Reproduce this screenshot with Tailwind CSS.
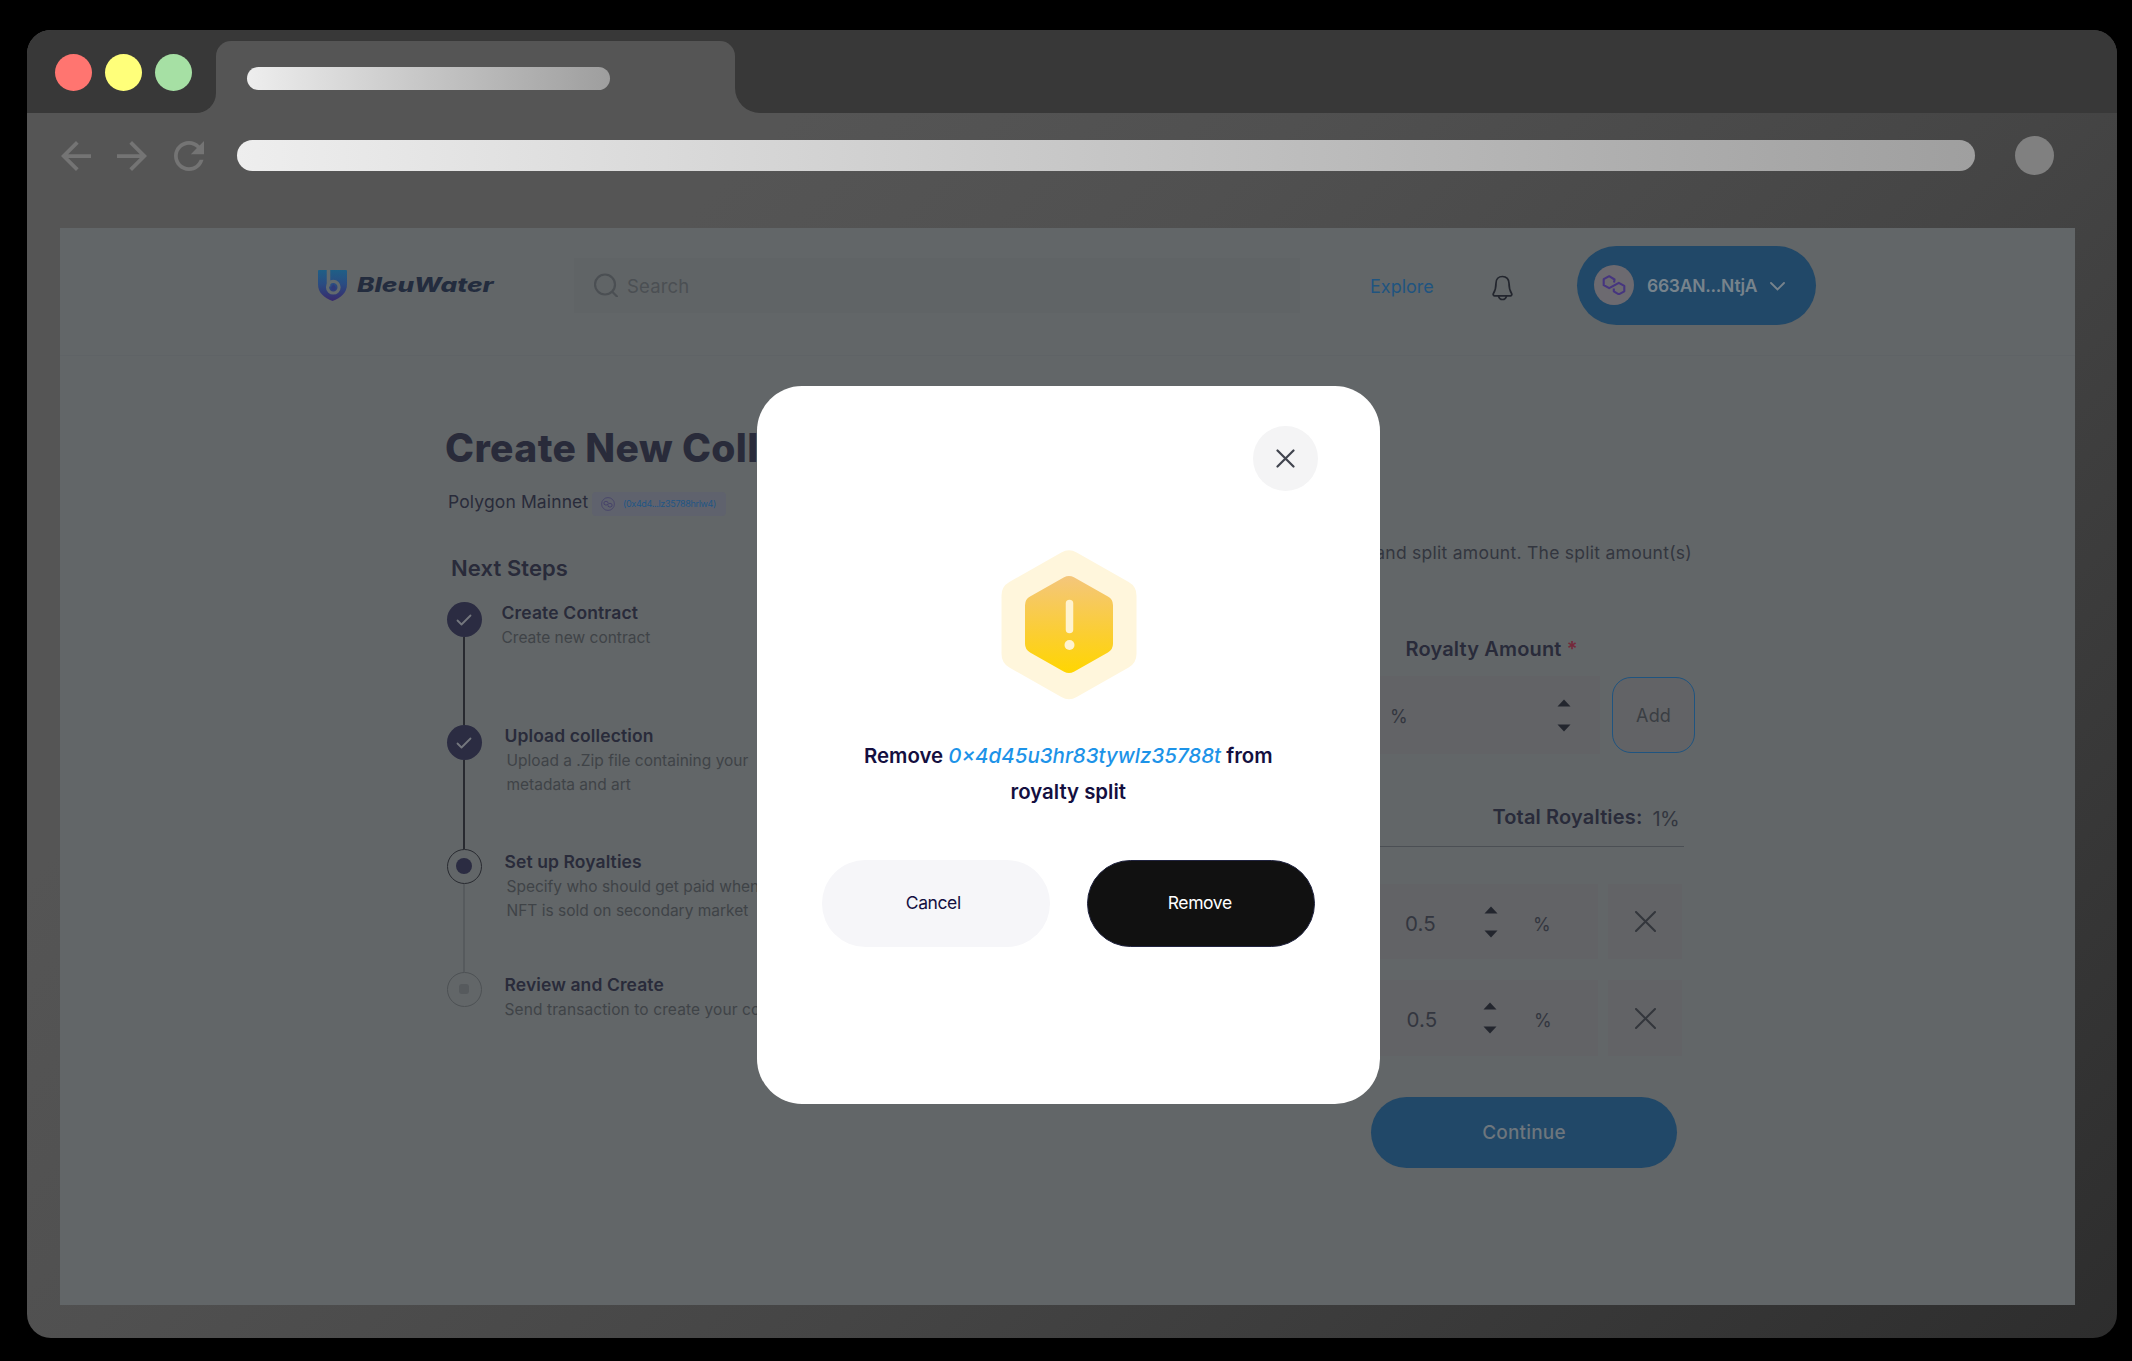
<!DOCTYPE html>
<html lang="en">
<head>
<meta charset="utf-8">
<title>BleuWater – Create New Collection</title>
<script src="https://cdn.jsdelivr.net/npm/@tailwindcss/browser@4"></script>
</head>
<body class="h-[1361px] w-[2132px] overflow-hidden bg-black pt-[30px] pl-[27px] font-['Inter',sans-serif] whitespace-nowrap">
<div class="relative flex h-[1307.5px] w-[2089.5px] flex-col overflow-hidden rounded-[24px] bg-[linear-gradient(135deg,#555_0%,#555_25%,#505050_40%,#454545_62%,#2d2d2d_100%)]">

  <!-- Tab strip -->
  <div class="flex h-[83px] shrink-0">
    <div class="flex w-[189px] items-center gap-[13px] rounded-br-[20px] bg-[#383838] pt-[2px] pl-[27.5px]">
      <span class="size-[37px] rounded-full bg-[#ff7570]"></span>
      <span class="size-[37px] rounded-full bg-[#ffff7a]"></span>
      <span class="size-[37px] rounded-full bg-[#a6e0a4]"></span>
    </div>
    <div class="w-[519px] bg-[linear-gradient(#383838_0,#383838_35px,transparent_35px)] pt-[10.5px]">
      <div class="h-full rounded-t-[15px] bg-[#555] pt-[26px] pl-[31px]">
        <div class="h-[23px] w-[363px] rounded-full bg-linear-to-r from-[#eee] to-[#9e9e9e]"></div>
      </div>
    </div>
    <div class="flex-1 rounded-bl-[25px] bg-[#383838]"></div>
  </div>

  <!-- Toolbar -->
  <div class="flex h-[115px] shrink-0 items-center pb-[30px] pl-[34px] text-[#747474]">
    <svg class="size-[30px]" viewBox="4 4 16 16" fill="currentColor"><path d="M20 11H7.83l5.59-5.59L12 4l-8 8 8 8 1.41-1.41L7.83 13H20v-2z"/></svg>
    <svg class="ml-[26px] size-[30px]" viewBox="4 4 16 16" fill="currentColor"><path d="M12 4l-1.41 1.41L16.17 11H4v2h12.17l-5.58 5.59L12 20l8-8z"/></svg>
    <svg class="ml-[27px] size-[30px]" viewBox="4 4 16 16" fill="currentColor"><path d="M17.65 6.35C16.2 4.9 14.21 4 12 4c-4.42 0-7.99 3.58-7.99 8s3.57 8 7.99 8c3.73 0 6.84-2.55 7.73-6h-2.08c-.82 2.33-3.04 4-5.65 4-3.31 0-6-2.69-6-6s2.69-6 6-6c1.66 0 3.14.69 4.22 1.78L13 11h7V4l-2.35 2.35z"/></svg>
    <div class="ml-[33px] h-[31px] w-[1738px] rounded-full bg-linear-to-r from-[#eee] to-[#9f9f9f]"></div>
    <div class="ml-[40px] size-[38.5px] rounded-full bg-[#808080]"></div>
  </div>

  <!-- Page -->
  <div class="ml-[33px] h-[1077px] w-[2015px] overflow-hidden bg-[#626668] text-[#292b3a]">
    <header class="flex h-[128px] items-center border-b border-[#5f6366] pb-[13px] pl-[258px]">
      <svg class="h-[31px] w-[29px]" viewBox="0 0 29 31" fill="none">
        <defs><linearGradient id="shield" x1="0" y1="0" x2="0" y2="1"><stop offset="0" stop-color="#1f5f86"/><stop offset=".45" stop-color="#2a4c82"/><stop offset="1" stop-color="#382a6c"/></linearGradient></defs>
        <path d="M1 0h27q1 0 1 1v13c0 9-6 13.500-14.500 17C6 27.500 0 23 0 14V1q0-1 1-1z" fill="url(#shield)"/>
        <path d="M10.500 0v16.500" stroke="#626a6e" stroke-width="3.600"/>
        <circle cx="15.300" cy="17.200" r="5.800" stroke="#626a6e" stroke-width="3.200"/>
        <path d="M15.500 14.200c1.500 1.800 2.200 2.700 2.200 3.700a2.200 2.200 0 0 1-4.400 0c0-1 .7-1.900 2.200-3.700z" fill="#2f3a7a"/>
      </svg>
      <div class="ml-[10px] w-[136px] text-[#232c3e]"><span class="inline-block origin-left scale-x-[1.310] text-[20px] leading-[24px] font-extrabold italic">BleuWater</span></div>
      <div class="ml-[81px] flex h-[55px] w-[726px] items-center bg-[#606466] pl-[20px] text-[#4b4f53]">
        <svg class="size-[24px]" viewBox="0 0 24 24" fill="none" stroke="currentColor" stroke-width="2.200" stroke-linecap="round"><circle cx="11" cy="11.500" r="10"/><path d="M18.500 19l4.500 4.500"/></svg>
        <span class="mt-[2px] ml-[9px] text-[18.500px] leading-[24px] tracking-[0.15px]">Search</span>
      </div>
      <span class="mt-[4px] ml-[70px] w-[63px] text-[18px] leading-[24px] text-[#1f5480]">Explore</span>
      <svg class="mt-[5px] ml-[59px] h-[26px] w-[21px]" viewBox="0 0 21 26" fill="none" stroke="#23262e" stroke-width="1.700" stroke-linejoin="round"><path d="M10.500 1.500c-4 0-6.500 2.800-6.500 6.800 0 5.200-.9 7.700-2.600 10.200-.7 1 .1 2.300 1.300 2.300h15.600c1.200 0 2-1.300 1.300-2.300C17.900 16 17 13.500 17 8.300c0-4-2.500-6.800-6.500-6.800z"/><path d="M6.500 21c.5 2.200 2 3.500 4 3.500s3.500-1.300 4-3.500"/></svg>
      <div class="ml-[64px] flex h-[79px] w-[238.500px] items-center rounded-full bg-[#214868] pl-[17px] text-[#77838c]">
        <span class="flex size-[40px] items-center justify-center rounded-full bg-[#6c6a70]">
          <svg class="h-[20px] w-[24px]" viewBox="0 0 24 20" fill="none" stroke="#46357f" stroke-width="2.100" stroke-linejoin="round"><path d="M12 7.500l.5-3L7.200 1.200 1.700 4.200v6L7.200 13.200l9.600-5.400 5.500 3v5.500l-5.500 3-5-3v-2.800"/></svg>
        </span>
        <span class="mt-[2px] ml-[13px] w-[110px] text-[17.500px] leading-[24px] font-semibold tracking-[-0.27px]">663AN...NtjA</span>
        <svg class="mt-[2px] ml-[13px] h-[9px] w-[15px]" viewBox="0 0 15 9" fill="none" stroke="currentColor" stroke-width="1.900" stroke-linecap="round"><path d="M1 1l6.500 6.500L14 1"/></svg>
      </div>
    </header>

    <main class="flex pl-[386px]">
      <!-- Left column: heading and progress steps -->
      <section class="w-[649px] pt-[67px]">
        <h1 class="-ml-px text-[39px] leading-[50px] font-extrabold tracking-[0.4px]">Create New Collection</h1>
        <div class="mt-[17px] flex h-[24px] items-center pl-[2px]">
          <span class="w-[143px] text-[17.500px] tracking-[0.13px]">Polygon Mainnet</span>
          <div class="mt-[4px] ml-px flex h-[24px] w-[134px] items-center rounded-[4px] bg-[#5f626d] pl-[9px]">
            <svg class="size-[14px]" viewBox="0 0 14 14" fill="none" stroke="#44406a"><circle cx="7" cy="7" r="6.400" stroke-width=".8"/><path d="M7 6.300V5.200l-2-1-2 1v2l2 1 4-2 2 1v2l-2 1-2-1V8.200" stroke-width=".9"/></svg>
            <span class="ml-[8px] text-[9px] leading-[12px] tracking-[-0.33px] text-[#1f5685]">(0x4d4...lz35788hrlw4)</span>
          </div>
        </div>
        <h2 class="mt-[40px] pl-[5px] text-[22px] leading-[28px] font-semibold tracking-[0.09px]">Next Steps</h2>

        <ol class="mt-[20px]">
          <li class="flex h-[123.300px]">
            <div class="flex w-[36px] flex-col items-center">
              <span class="flex size-[35px] shrink-0 items-center justify-center rounded-full bg-[#2b2c42]"><svg class="h-[12px] w-[16px]" viewBox="0 0 16 12" fill="none" stroke="#74777e" stroke-width="1.800" stroke-linecap="round" stroke-linejoin="round"><path d="M1.500 6.500L5.500 10.500 14.500 1.500"/></svg></span>
              <span class="w-[2px] flex-1 bg-[#282a30]"></span>
            </div>
            <div class="pt-[0.5px] pl-[19.500px]">
              <h3 class="text-[17.500px] leading-[20px] font-semibold tracking-[0.15px]">Create Contract</h3>
              <p class="mt-[3px] text-[15.500px] leading-[24px] text-[#3f4347]">Create new contract</p>
            </div>
          </li>
          <li class="flex h-[123.300px]">
            <div class="flex w-[36px] flex-col items-center">
              <span class="flex size-[35px] shrink-0 items-center justify-center rounded-full bg-[#2b2c42]"><svg class="h-[12px] w-[16px]" viewBox="0 0 16 12" fill="none" stroke="#74777e" stroke-width="1.800" stroke-linecap="round" stroke-linejoin="round"><path d="M1.500 6.500L5.500 10.500 14.500 1.500"/></svg></span>
              <span class="w-[2px] flex-1 bg-[#282a30]"></span>
            </div>
            <div class="pt-px pl-[22.500px]">
              <h3 class="text-[17.500px] leading-[20px] font-semibold tracking-[0.1px]">Upload collection</h3>
              <p class="mt-[3px] pl-[2px] text-[15.500px] leading-[24px] text-[#3f4347]">Upload a .Zip file containing your<br>metadata and art</p>
            </div>
          </li>
          <li class="flex h-[123.300px]">
            <div class="flex w-[36px] flex-col items-center">
              <span class="flex size-[35px] shrink-0 items-center justify-center rounded-full border-[1.500px] border-[#282a30]"><i class="size-[16px] rounded-full bg-[#2b2c42]"></i></span>
              <span class="w-[2px] flex-1 bg-[#565a5d]"></span>
            </div>
            <div class="pt-[3.500px] pl-[22.500px]">
              <h3 class="text-[17.500px] leading-[20px] font-semibold tracking-[0.1px]">Set up Royalties</h3>
              <p class="mt-[2.500px] pl-[2px] text-[15.500px] leading-[24px] text-[#3f4347]">Specify who should get paid when<br>NFT is sold on secondary market</p>
            </div>
          </li>
          <li class="flex">
            <div class="flex w-[36px] flex-col items-center">
              <span class="flex size-[35px] shrink-0 items-center justify-center rounded-full border-[1.500px] border-[#4d5154]"><i class="size-[10px] rounded-[3px] bg-[#565a5d]"></i></span>
            </div>
            <div class="pt-[3px] pl-[22.500px]">
              <h3 class="text-[17.500px] leading-[20px] font-semibold tracking-[0.1px]">Review and Create</h3>
              <p class="mt-[3.500px] text-[15.500px] leading-[24px] tracking-[0.1px] text-[#3f4347]">Send transaction to create your collection</p>
            </div>
          </li>
        </ol>
      </section>

      <!-- Right column: royalty form -->
      <section class="w-[600px] pt-[183px]">
        <p class="pr-[3px] text-right text-[17.500px] leading-[28px] tracking-[0.27px] text-[#33363f]">and split amount. The split amount(s)</p>
        <div class="mt-[68px] pl-[310.500px] text-[20px] leading-[28px] font-semibold tracking-[0.16px]">Royalty Amount <span class="text-[#75283a]">*</span></div>
        <div class="mt-[13px] flex h-[78px] items-center">
          <div class="flex h-full w-[505px] items-center bg-[#626366] pl-[295px]">
            <span class="w-[167px] pt-[3px] text-[18px] text-[#33363f]">%</span>
            <svg class="h-[33px] w-[14px]" viewBox="0 0 14 33" fill="#23262e"><path d="M.5 7.500h13L7 .5zM.5 25.500h13L7 32.500z"/></svg>
          </div>
          <div class="ml-[12px] flex h-[76px] w-[83px] items-center justify-center rounded-[19px] border-[1.500px] border-[#1f5480] bg-[#626366] text-[18px] tracking-[0.1px] text-[#3a3e43]">Add</div>
        </div>
        <div class="mr-[11px] flex h-[93px] items-center justify-end border-b-[1.500px] border-[#4b4f54] pt-[34px] pr-[5px] text-[20px]">
          <span class="font-semibold tracking-[0.16px]">Total Royalties:</span><span class="mt-[3px] ml-[10px] tracking-[-0.6px] text-[#33363f]">1%</span>
        </div>
        <div class="mt-[37px] flex h-[75px] gap-[10px]">
          <div class="flex h-full w-[503px] items-center bg-[#626366] pl-[310px] text-[#33363f]">
            <span class="w-[79px] pt-[5px] text-[20.500px] tracking-[0.1px]">0.5</span>
            <svg class="h-[32px] w-[14px]" viewBox="0 0 14 32" fill="#23262e"><path d="M.5 7.500h13L7 .5zM.5 24.500h13L7 31.500z"/></svg>
            <span class="ml-[35px] pt-[5px] text-[18px]">%</span>
          </div>
          <div class="flex h-full w-[74px] items-center justify-center bg-[#626366] pl-px"><svg class="size-[21px]" viewBox="0 0 21 21" fill="none" stroke="#33363c" stroke-width="2" stroke-linecap="round"><path d="M1 1l19 19M20 1L1 20"/></svg></div>
        </div>
        <div class="mt-[21px] flex h-[76px] gap-[10px]">
          <div class="flex h-full w-[503px] items-center bg-[#626366] pl-[311.500px] text-[#33363f]">
            <span class="w-[76.500px] pt-[5px] text-[20.500px] tracking-[0.1px]">0.5</span>
            <svg class="h-[32px] w-[14px]" viewBox="0 0 14 32" fill="#23262e"><path d="M.5 7.500h13L7 .5zM.5 24.500h13L7 31.500z"/></svg>
            <span class="ml-[37px] pt-[5px] text-[18px]">%</span>
          </div>
          <div class="flex h-full w-[74px] items-center justify-center bg-[#626366] pl-px"><svg class="size-[21px]" viewBox="0 0 21 21" fill="none" stroke="#33363c" stroke-width="2" stroke-linecap="round"><path d="M1 1l19 19M20 1L1 20"/></svg></div>
        </div>
        <div class="mt-[41px] ml-[276px] flex h-[71px] w-[306px] items-center justify-center rounded-full bg-[#214868] pt-px text-[19px] font-medium tracking-[0.2px] text-[#6d767d]">Continue</div>
      </section>
    </main>
  </div>

  <!-- Confirmation dialog -->
  <div role="dialog" class="absolute top-[356px] left-[730px] flex h-[718px] w-[622.500px] flex-col items-center rounded-[45px] bg-white pt-[40px]">
    <div class="flex w-full justify-end pr-[61.500px]">
      <button class="flex size-[65px] items-center justify-center rounded-full bg-[#f4f4f5]"><svg class="size-[19px]" viewBox="0 0 19 19" fill="none" stroke="#40444e" stroke-width="2.200" stroke-linecap="round"><path d="M1.500 1.500l16 16M17.500 1.500l-16 16"/></svg></button>
    </div>
    <svg class="mt-[59px] ml-[2px] h-[150px] w-[136px]" viewBox="0 0 136 150">
      <defs><linearGradient id="warn" gradientUnits="userSpaceOnUse" x1="0" y1="26" x2="0" y2="124"><stop offset="0" stop-color="#f4c67c"/><stop offset=".6" stop-color="#fbce30"/><stop offset="1" stop-color="#ffd600"/></linearGradient></defs>
      <path d="M68 16L120 45.500v58.500L68 133.500 16 104v-58.500z" fill="#fff6dc" stroke="#fff6dc" stroke-width="31" stroke-linejoin="round"/>
      <path d="M68 36L102 55.200v38.600L68 113 34 93.800V55.200z" fill="url(#warn)" stroke="url(#warn)" stroke-width="20" stroke-linejoin="round"/>
      <path d="M68.500 53.500v26" stroke="#fff3cf" stroke-width="7.500" stroke-linecap="round"/>
      <circle cx="68.500" cy="95" r="5" fill="#fff3cf"/>
    </svg>
    <p class="mt-[38px] text-center text-[20.400px] leading-[36px] font-semibold text-[#140f40]">Remove <em class="text-[20.500px] font-medium text-[#1d93e8]">0×4d45u3hr83tywlz35788t</em> from<br>royalty split</p>
    <div class="mt-[50px] flex gap-[37px]">
      <button class="h-[87px] w-[228px] rounded-full bg-[#f6f6f9] pr-[5px] text-[17.500px] tracking-[-0.4px] text-[#140f40]">Cancel</button>
      <button class="h-[87px] w-[228px] rounded-full border border-[#20233f] bg-[#111] pr-[2px] text-[17.500px] tracking-[-0.4px] text-white">Remove</button>
    </div>
  </div>
</div>
</body>
</html>
